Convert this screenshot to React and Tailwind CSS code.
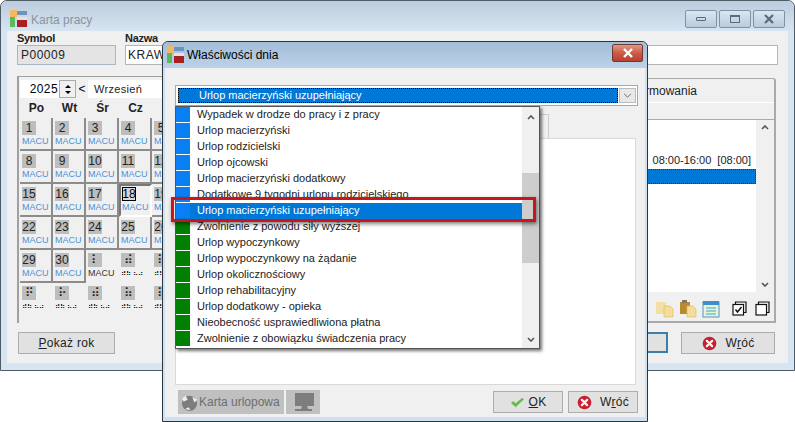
import React from "react";

const FONT = "font-['Liberation_Sans',Arial,sans-serif]";

const items = [
  ["Wypadek w drodze do pracy i z pracy", "blue"],
  ["Urlop macierzyński", "blue"],
  ["Urlop rodzicielski", "blue"],
  ["Urlop ojcowski", "blue"],
  ["Urlop macierzyński dodatkowy", "blue"],
  ["Dodatkowe 9 tygodni urlopu rodzicielskiego", "blue"],
  ["Urlop macierzyński uzupełniający", "selected"],
  ["Zwolnienie z powodu siły wyższej", "green"],
  ["Urlop wypoczynkowy", "green"],
  ["Urlop wypoczynkowy na żądanie", "green"],
  ["Urlop okolicznościowy", "green"],
  ["Urlop rehabilitacyjny", "green"],
  ["Urlop dodatkowy - opieka", "green"],
  ["Nieobecność usprawiedliwiona płatna", "green"],
  ["Zwolnienie z obowiązku świadczenia pracy", "green"],
];

// only the five columns that show beside the dialog
const weeks = [
  ["1", "2", "3", "4", "5"],
  ["8", "9", "10", "11", "12"],
  ["15", "16", "17", "18", "19"],
  ["22", "23", "24", "25", "26"],
  ["29", "30", "⠇", "⠾", "⠷"],
  ["⠟", "⠗", "⠾", "⠷", "⠿"],
];

function Logo({ className }) {
  return (
    <svg viewBox="0 0 17 17" className={className}>
      <rect x="0" y="0" width="7" height="7" fill="#f4b860" />
      <rect x="7" y="1" width="10" height="4" fill="#6d95bb" />
      <rect x="0" y="7" width="5" height="10" fill="#5cb85c" />
      <rect x="7" y="7" width="10" height="10" fill="#a8201f" />
      <rect x="7" y="7" width="10" height="3" fill="#e9e0dc" />
    </svg>
  );
}

function CancelIcon() {
  return (
    <svg viewBox="0 0 16 16" className="w-[15px] h-[15px] shrink-0">
      <circle cx="8" cy="8" r="7.3" fill="#c8202e" />
      <path d="M5.2 5.2 10.8 10.8M10.8 5.2 5.2 10.8" stroke="#f4f4f4" strokeWidth="2.4" strokeLinecap="round" />
    </svg>
  );
}

function CheckIcon() {
  return (
    <svg viewBox="0 0 16 12" className="w-[15px] h-[11px] shrink-0">
      <path d="M1 6.5 3.5 4.5 6 7 13 1l2 1.5L6 11z" fill="#62b84a" stroke="#8fce7a" strokeWidth="0.5" />
    </svg>
  );
}

function FolderIcon({ dark }) {
  return (
    <svg viewBox="0 0 18 18" className="w-[18px] h-[18px]">
      <rect x={dark ? 1 : 0} y="2" width="10" height="12" fill={dark ? "#b98a2e" : "#f2dfa3"} />
      {dark && <rect x="3" y="0" width="5" height="3" fill="#8a7650" />}
      <path d="M8 6h6l3 3v8H8z" fill="#f5dc9a" stroke="#d9b860" strokeWidth="0.6" />
    </svg>
  );
}

function NoteIcon() {
  return (
    <svg viewBox="0 0 18 18" className="w-[18px] h-[18px]">
      <rect x="1" y="2" width="16" height="15" fill="#e8f3d8" stroke="#4f95c8" />
      <rect x="1" y="1" width="16" height="4" fill="#3f8fd0" />
      <path d="M4 8h10M4 11h10M4 14h10" stroke="#3aa7c9" />
    </svg>
  );
}

function CopyBox({ checked }) {
  return (
    <svg viewBox="0 0 15 15" className="w-[15px] h-[15px]" fill="none" stroke="#111" strokeWidth="1.2">
      <path d="M3.5 3V1h10.5v10.5H12" />
      <rect x="1" y="3.5" width="10.5" height="10.5" fill="#fff" />
      {checked && <path d="M3.5 8.5 5.5 11 9.5 6" strokeWidth="1.5" />}
    </svg>
  );
}

function WinButton({ children }) {
  return (
    <div className="h-[18px] w-[32px] rounded-[2px] border border-[#8093a6] flex items-center justify-center bg-gradient-to-b from-[#dbe6f0] to-[#b9cbdc]">
      {children}
    </div>
  );
}

function ActionButton({ children, className }) {
  return (
    <div className={`h-[22px] border border-[#adadad] bg-[#e1e1e1] flex items-center justify-center text-[12px] text-[#222] ${className}`}>
      {children}
    </div>
  );
}

function DayCell({ day, week, col }) {
  const inMonth = week < 4 || (week === 4 && col < 2);
  const selected = day === "18";
  const macuDark = week === 4 && col === 2;
  const frame = !inMonth
    ? ""
    : selected
      ? "border-2 border-l-[#777] border-t-[#777] border-r-white border-b-white"
      : "border-r-2 border-b-2 border-[#8c8c8c]";
  return (
    <div className={`w-[33px] h-[33px] shrink-0 overflow-hidden ${frame} ${selected ? "pl-[1px] pt-[1px]" : "pl-[2px] pt-[3px]"}`}>
      <div className={`w-[14px] h-[14px] flex items-center justify-center text-[12px] leading-none ${selected ? "bg-[#d8d8d8] border border-black text-black" : "bg-[#bdbdbd] text-[#222]"}`}>
        {day}
      </div>
      {inMonth || macuDark ? (
        <div className={`mt-[1px] text-[9px] leading-[11px] ${macuDark ? "text-[#333]" : "text-[#4a90d9]"}`}>MACU</div>
      ) : (
        <div className="mt-[1px] text-[7px] leading-[11px] text-black whitespace-nowrap">⠾⠷ ⠦⠴</div>
      )}
    </div>
  );
}

function Calendar() {
  return (
    <div className="w-[240px] h-[247px] shrink-0 border-l-2 border-t border-[#a0a0a0] pl-[1px] pt-[3px]">
      <div className="flex items-center h-[18px]">
        <div className="w-[39px] h-[18px] bg-white text-right pr-[1px] text-[12px] leading-[18px] text-black tracking-[0.4px]">2025</div>
        <div className="w-[17px] h-[18px] border border-[#aaa] flex flex-col items-center justify-center gap-[3px] bg-[#f0f0f0]">
          <div className="w-0 h-0 border-x-[3px] border-x-transparent border-b-[3px] border-b-black" />
          <div className="w-0 h-0 border-x-[3px] border-x-transparent border-t-[3px] border-t-black" />
        </div>
        <div className="w-[12px] text-center text-[12px] text-black">&lt;</div>
        <div className="w-[100px] h-[18px] bg-white pl-[6px] text-[11px] leading-[18px] text-[#222] tracking-[0.3px]">Wrzesień</div>
      </div>
      <div className="flex h-[20px] items-center font-bold text-[12px] text-[#222]">
        {["Po", "Wt", "Śr", "Cz"].map((d) => (
          <div key={d} className="w-[33px] text-center shrink-0">{d}</div>
        ))}
      </div>
      {weeks.map((row, w) => (
        <div key={w} className="flex">
          {row.map((d, c) => (
            <DayCell key={c} day={d} week={w} col={c} />
          ))}
        </div>
      ))}
    </div>
  );
}

function BackWindow() {
  return (
    <div className="absolute left-0 top-0 w-[795px] h-[371px] rounded-t-[7px] border border-[#4f5b66] bg-[#d7e4f1] flex flex-col">
      <div className="h-[30px] shrink-0 flex items-start pl-[9px] pr-[9px] pt-[9px] bg-gradient-to-b from-[#bccddd] to-[#d7e4f1] rounded-t-[7px]">
        <Logo className="w-[17px] h-[17px]" />
        <span className="ml-[4px] text-[12px] leading-[20px] text-[#8a949e]">Karta pracy</span>
        <div className="ml-auto flex gap-[2px]">
          <WinButton><div className="w-[10px] h-[4px] border border-[#5a6a7a] rounded-[1px]" /></WinButton>
          <WinButton><div className="w-[10px] h-[8px] border border-[#5a6a7a] border-t-2" /></WinButton>
          <WinButton>
            <svg viewBox="0 0 12 10" className="w-[12px] h-[10px]"><path d="M2 1 10 9M10 1 2 9" stroke="#5a6a7a" strokeWidth="2.2" /></svg>
          </WinButton>
        </div>
      </div>
      <div className="flex-1 mx-[6px] mb-[7px] bg-[#f0f0f0] px-[10px] pt-[1px] flex flex-col">
        <div className="flex gap-[9px] h-[33px]">
          <div>
            <div className="text-[11px] leading-[13px] font-bold text-[#222] tracking-[-0.3px]">Symbol</div>
            <div className="w-[99px] h-[20px] border border-[#a6b8c8] bg-[#e4e4e4] pl-[3px] text-[12px] leading-[18px] text-[#222] tracking-[0.5px]">P00009</div>
          </div>
          <div className="flex-1">
            <div className="text-[11px] leading-[13px] font-bold text-[#222] tracking-[-0.3px]">Nazwa</div>
            <div className="h-[20px] border border-[#b5b5b5] bg-white pl-[2px] text-[12px] leading-[18px] text-[#222] tracking-[0.5px]">KRAW</div>
          </div>
        </div>
        <div className="flex mt-[11px] gap-[20px]">
          <Calendar />
          <div className="flex-1 h-[245px] mt-[2px] mr-[2px] border-r-2 border-t border-[#aaa] rounded-tr-[3px] flex flex-col">
            <div className="h-[24px] shrink-0 text-right pr-[77px] text-[12px] leading-[24px] text-[#222] border-b border-white">Normowania</div>
            <div className="h-[17px] shrink-0 border-b border-[#aaa]" />
            <div className="h-[172px] shrink-0 bg-white flex">
              <div className="flex-1 pt-[33px]">
                <div className="h-[15px] text-right pr-[5px] text-[11px] leading-[15px] text-[#222]">08:00-16:00&nbsp; [08:00]</div>
                <div className="h-[15px] mt-[1px] bg-[#0078d7] border border-dotted border-[#333]" />
              </div>
              <div className="w-[18px] shrink-0 bg-[#f0f0f0] flex flex-col items-center justify-between py-[5px]">
                <svg viewBox="0 0 8 5" className="w-[8px] h-[5px]"><path d="M1 4 4 1l3 3" fill="none" stroke="#555" strokeWidth="1.6" /></svg>
                <svg viewBox="0 0 8 5" className="w-[8px] h-[5px]"><path d="M1 1l3 3 3-3" fill="none" stroke="#555" strokeWidth="1.6" /></svg>
              </div>
            </div>
            <div className="flex-1 flex items-center justify-end pr-[4px] pt-[4px] border-b-2 border-[#aaa]">
              <div className="flex items-center gap-[5px]">
                <FolderIcon />
                <FolderIcon dark />
                <NoteIcon />
              </div>
              <div className="ml-[12px] flex gap-[8px]">
                <CopyBox checked />
                <CopyBox />
              </div>
            </div>
          </div>
        </div>
        <div className="flex mt-[9px] items-center">
          <ActionButton className="w-[97px] ml-[1px]"><span className="tracking-[0.3px]"><u>P</u>okaż rok</span></ActionButton>
          <div className="ml-auto flex gap-[13px] mr-[3px]">
            <div className="w-[60px] h-[21px] border-2 border-[#3b7ea8] bg-[#e1e1e1]" />
            <ActionButton className="w-[94px] gap-[9px] tracking-[0.3px]"><CancelIcon /><span>W<u>r</u>óć</span></ActionButton>
          </div>
        </div>
      </div>
    </div>
  );
}

function DropdownList() {
  return (
    <div className="absolute left-[10px] top-[38px] w-[365px] h-[243px] bg-white border border-[#555] shadow-[2px_2px_3px_rgba(0,0,0,0.55)] flex z-10">
      <div className="flex-1">
        {items.map(([label, kind]) => (
          <div key={label} className={`h-[16px] flex ${kind === "selected" ? "bg-[#0078d7] text-white" : "text-[#222]"}`}>
            <div className={`w-[14px] h-[15px] shrink-0 ${kind === "green" ? "bg-[#008000]" : "bg-[#0a7ff5]"}`} />
            <div className="pl-[7px] text-[11px] leading-[15px] whitespace-nowrap">{label}</div>
          </div>
        ))}
      </div>
      <div className="w-[17px] shrink-0 bg-[#f0f0f0] flex flex-col items-center">
        <svg viewBox="0 0 8 5" className="w-[8px] h-[5px] mt-[8px]"><path d="M1 4 4 1l3 3" fill="none" stroke="#555" strokeWidth="1.6" /></svg>
        <div className="w-full h-[90px] mt-[53px] bg-[#cdcdcd]" />
        <svg viewBox="0 0 8 5" className="w-[8px] h-[5px] mt-auto mb-[6px]"><path d="M1 1l3 3 3-3" fill="none" stroke="#555" strokeWidth="1.6" /></svg>
      </div>
    </div>
  );
}

function Dialog() {
  return (
    <div className="absolute left-[162px] top-[41px] w-[486px] h-[381px] rounded-t-[6px] border border-[#2b3640] bg-[#cfe0ef] flex flex-col">
      <div className="h-[26px] shrink-0 flex items-center pl-[4px] pr-[4px] bg-gradient-to-b from-[#a3bdd8] to-[#bcd2e8] rounded-t-[6px]">
        <Logo className="w-[17px] h-[17px] -mt-[2px]" />
        <span className="ml-[3px] text-[12px] text-black">Właściwości dnia</span>
        <div className="ml-auto -mt-[4px] w-[31px] h-[18px] rounded-[2px] border border-[#6e3a34] bg-gradient-to-b from-[#e09a88] via-[#cc5a45] to-[#b8402c] flex items-center justify-center">
          <svg viewBox="0 0 12 10" className="w-[12px] h-[10px]"><path d="M2 1 10 9M10 1 2 9" stroke="#fff" strokeWidth="2.4" /></svg>
        </div>
      </div>
      <div className="relative flex-1 mx-[2px] mb-[4px] bg-[#f0f0f0] pl-[10px] pr-[9px] pt-[17px] flex flex-col">
        <div className="h-[21px] w-[463px] shrink-0 border border-[#a8a8a8] bg-white p-[2px] pr-[1px] flex gap-[1px]">
          <div className="flex-1 bg-[#0078d7] border border-dotted border-black pl-[20px] text-[11px] leading-[13px] text-white">Urlop macierzyński uzupełniający</div>
          <div className="w-[17px] bg-[#e8e8e8] border border-[#bbb] flex items-center justify-center">
            <svg viewBox="0 0 10 6" className="w-[9px] h-[5px]"><path d="M1 1l4 4 4-4" fill="none" stroke="#555" /></svg>
          </div>
        </div>
        <div className="h-[32px] shrink-0 flex justify-end pr-[87px] pt-[8px]">
          <div className="w-[10px] h-[24px] border-t border-r border-[#ccc]" />
        </div>
        <div className="h-[247px] shrink-0 bg-white border border-[#d9d9d9]" />
        <div className="flex mt-[5px] items-center ml-[3px]">
          <div className="w-[106px] h-[24px] bg-[#c0c0c0] flex items-center pl-[2px] text-[12px] text-[#6e6e6e]">
            <svg viewBox="0 0 20 20" className="w-[19px] h-[19px] shrink-0">
              <circle cx="10" cy="11" r="8" fill="#7d7d7d" />
              <path d="M2 6l4-3 2 4-4 2zM13 4l5 3-3 3z" fill="#efefef" />
              <path d="M5 17l4-2 2 3z" fill="#efefef" />
            </svg>
            Karta urlopowa
          </div>
          <div className="w-[34px] h-[24px] ml-[2px] bg-[#c0c0c0] flex items-center justify-center">
            <svg viewBox="0 0 26 20" className="w-[26px] h-[20px]">
              <rect x="5" y="1" width="19" height="13" fill="#7d7d7d" />
              <path d="M12 14h5l1 3h4v2H5v-2h6z" fill="#7d7d7d" />
            </svg>
          </div>
          <div className="ml-auto flex gap-[5px] mr-[-2px]">
            <ActionButton className="w-[70px] gap-[4px] tracking-[0.3px]"><CheckIcon /><span><u>O</u>K</span></ActionButton>
            <ActionButton className="w-[70px] gap-[8px] tracking-[0.3px]"><CancelIcon /><span>W<u>r</u>óć</span></ActionButton>
          </div>
        </div>
        <DropdownList />
        <div className="absolute left-[6px] top-[129px] w-[365px] h-[25px] border-[3px] border-[#c8161d] shadow-[1px_2px_4px_rgba(0,0,0,0.5)] z-20" />
      </div>
    </div>
  );
}

export default function App() {
  return (
    <div className={`relative w-[795px] h-[422px] overflow-hidden bg-white ${FONT}`}>
      <BackWindow />
      <Dialog />
    </div>
  );
}
